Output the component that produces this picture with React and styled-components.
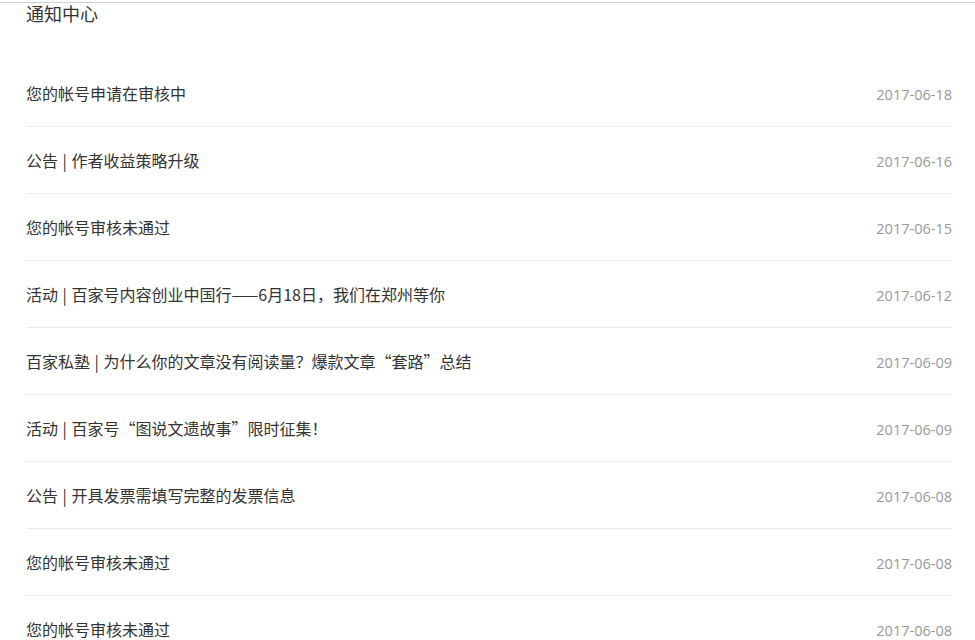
import React from "react";
import styled, { createGlobalStyle } from "styled-components";

const Global = createGlobalStyle`
  html, body { margin: 0; padding: 0; background: #fff; }
  body { font-family: "Noto Sans CJK SC", sans-serif; color: #333; }
`;

const Page = styled.div`
  border-top: 1px solid #cfcfcf;
  margin-top: 2px;
  padding: 0 23px 0 26px;
`;

const Title = styled.h2`
  margin: 0;
  font-size: 18px;
  font-weight: normal;
  line-height: 20px;
  height: 57px;
  color: #333;
  font-family: "Noto Sans CJK SC", sans-serif;
`;

const List = styled.ul`
  list-style: none;
  margin: 0;
  padding: 0;
`;

const Row = styled.li`
  display: flex;
  align-items: center;
  justify-content: space-between;
  height: 66px;
  border-bottom: 1px solid #ececec;
`;

const Subject = styled.span`
  font-family: "Noto Sans CJK SC", sans-serif;
  font-size: 16px;
  word-spacing: 1px;
  color: #333;
`;

const DateText = styled.span`
  font-family: "Open Sans", sans-serif;
  font-size: 14.5px;
  color: #999;
  padding-top: 2px;
`;

const items = [
  ["您的帐号申请在审核中", "2017-06-18"],
  ["公告 | 作者收益策略升级", "2017-06-16"],
  ["您的帐号审核未通过", "2017-06-15"],
  ["活动 | 百家号内容创业中国行——6月18日，我们在郑州等你", "2017-06-12"],
  ["百家私塾 | 为什么你的文章没有阅读量？爆款文章“套路”总结", "2017-06-09"],
  ["活动 | 百家号“图说文遗故事”限时征集！", "2017-06-09"],
  ["公告 | 开具发票需填写完整的发票信息", "2017-06-08"],
  ["您的帐号审核未通过", "2017-06-08"],
  ["您的帐号审核未通过", "2017-06-08"],
];

export default function App() {
  return (
    <>
      <Global />
      <Page>
        <Title>通知中心</Title>
        <List>
          {items.map(([t, d], i) => (
            <Row key={i}>
              <Subject>{t}</Subject>
              <DateText>{d}</DateText>
            </Row>
          ))}
        </List>
      </Page>
    </>
  );
}
